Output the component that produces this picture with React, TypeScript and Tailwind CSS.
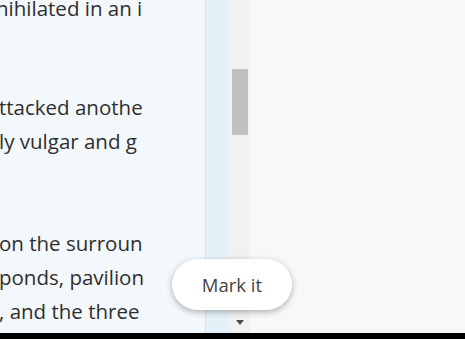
import React from 'react';

const paragraphs: string[][] = [
  ['nihilated in an i'],
  ['ttacked anothe', 'ly vulgar and g'],
  ['on the surroun', 'ponds, pavilion', ', and the three'],
];

export default function App() {
  return (
    <div className="relative flex h-[339px] w-[465px] flex-col overflow-hidden bg-black font-['Open_Sans',sans-serif]">
      <div className="flex h-[333px]">
        {/* reading panel */}
        <div className="w-[206px] overflow-hidden border-r border-[#d5e0e7] bg-[#f3f8fc]">
          <div className="-ml-[1px] -mt-[9px] w-[144px] overflow-hidden text-[20.5px] leading-[34px] text-[#2f2f2f]">
            {paragraphs.map((p, i) => (
              <div key={i} className={i === 0 ? '-ml-[3px] mb-[65px]' : 'mb-[68px]'}>
                {p.map((line) => (
                  <div key={line} className="whitespace-nowrap">
                    {line}
                  </div>
                ))}
              </div>
            ))}
          </div>
        </div>
        <div className="w-[24px] bg-[#e4f1f8]" />
        {/* scrollbar */}
        <div className="flex w-[20px] flex-col justify-between bg-[#f1f1f1]">
          <div className="mx-[2px] mt-[69px] h-[66px] bg-[#c1c1c1]" />
          <div className="mb-[8px] flex justify-center">
            <div className="h-0 w-0 border-x-[4px] border-t-[5px] border-x-transparent border-t-[#505050]" />
          </div>
        </div>
        <div className="flex-1 bg-[#f8f8f8]" />
      </div>
      <div className="h-[6px] bg-black" />

      <button className="absolute left-[172px] top-[259px] flex h-[51px] w-[120px] items-center justify-center rounded-full bg-white text-[18.5px] text-[#444] shadow-[0_2px_6px_rgba(0,0,0,0.3)]">
        Mark it
      </button>
    </div>
  );
}
